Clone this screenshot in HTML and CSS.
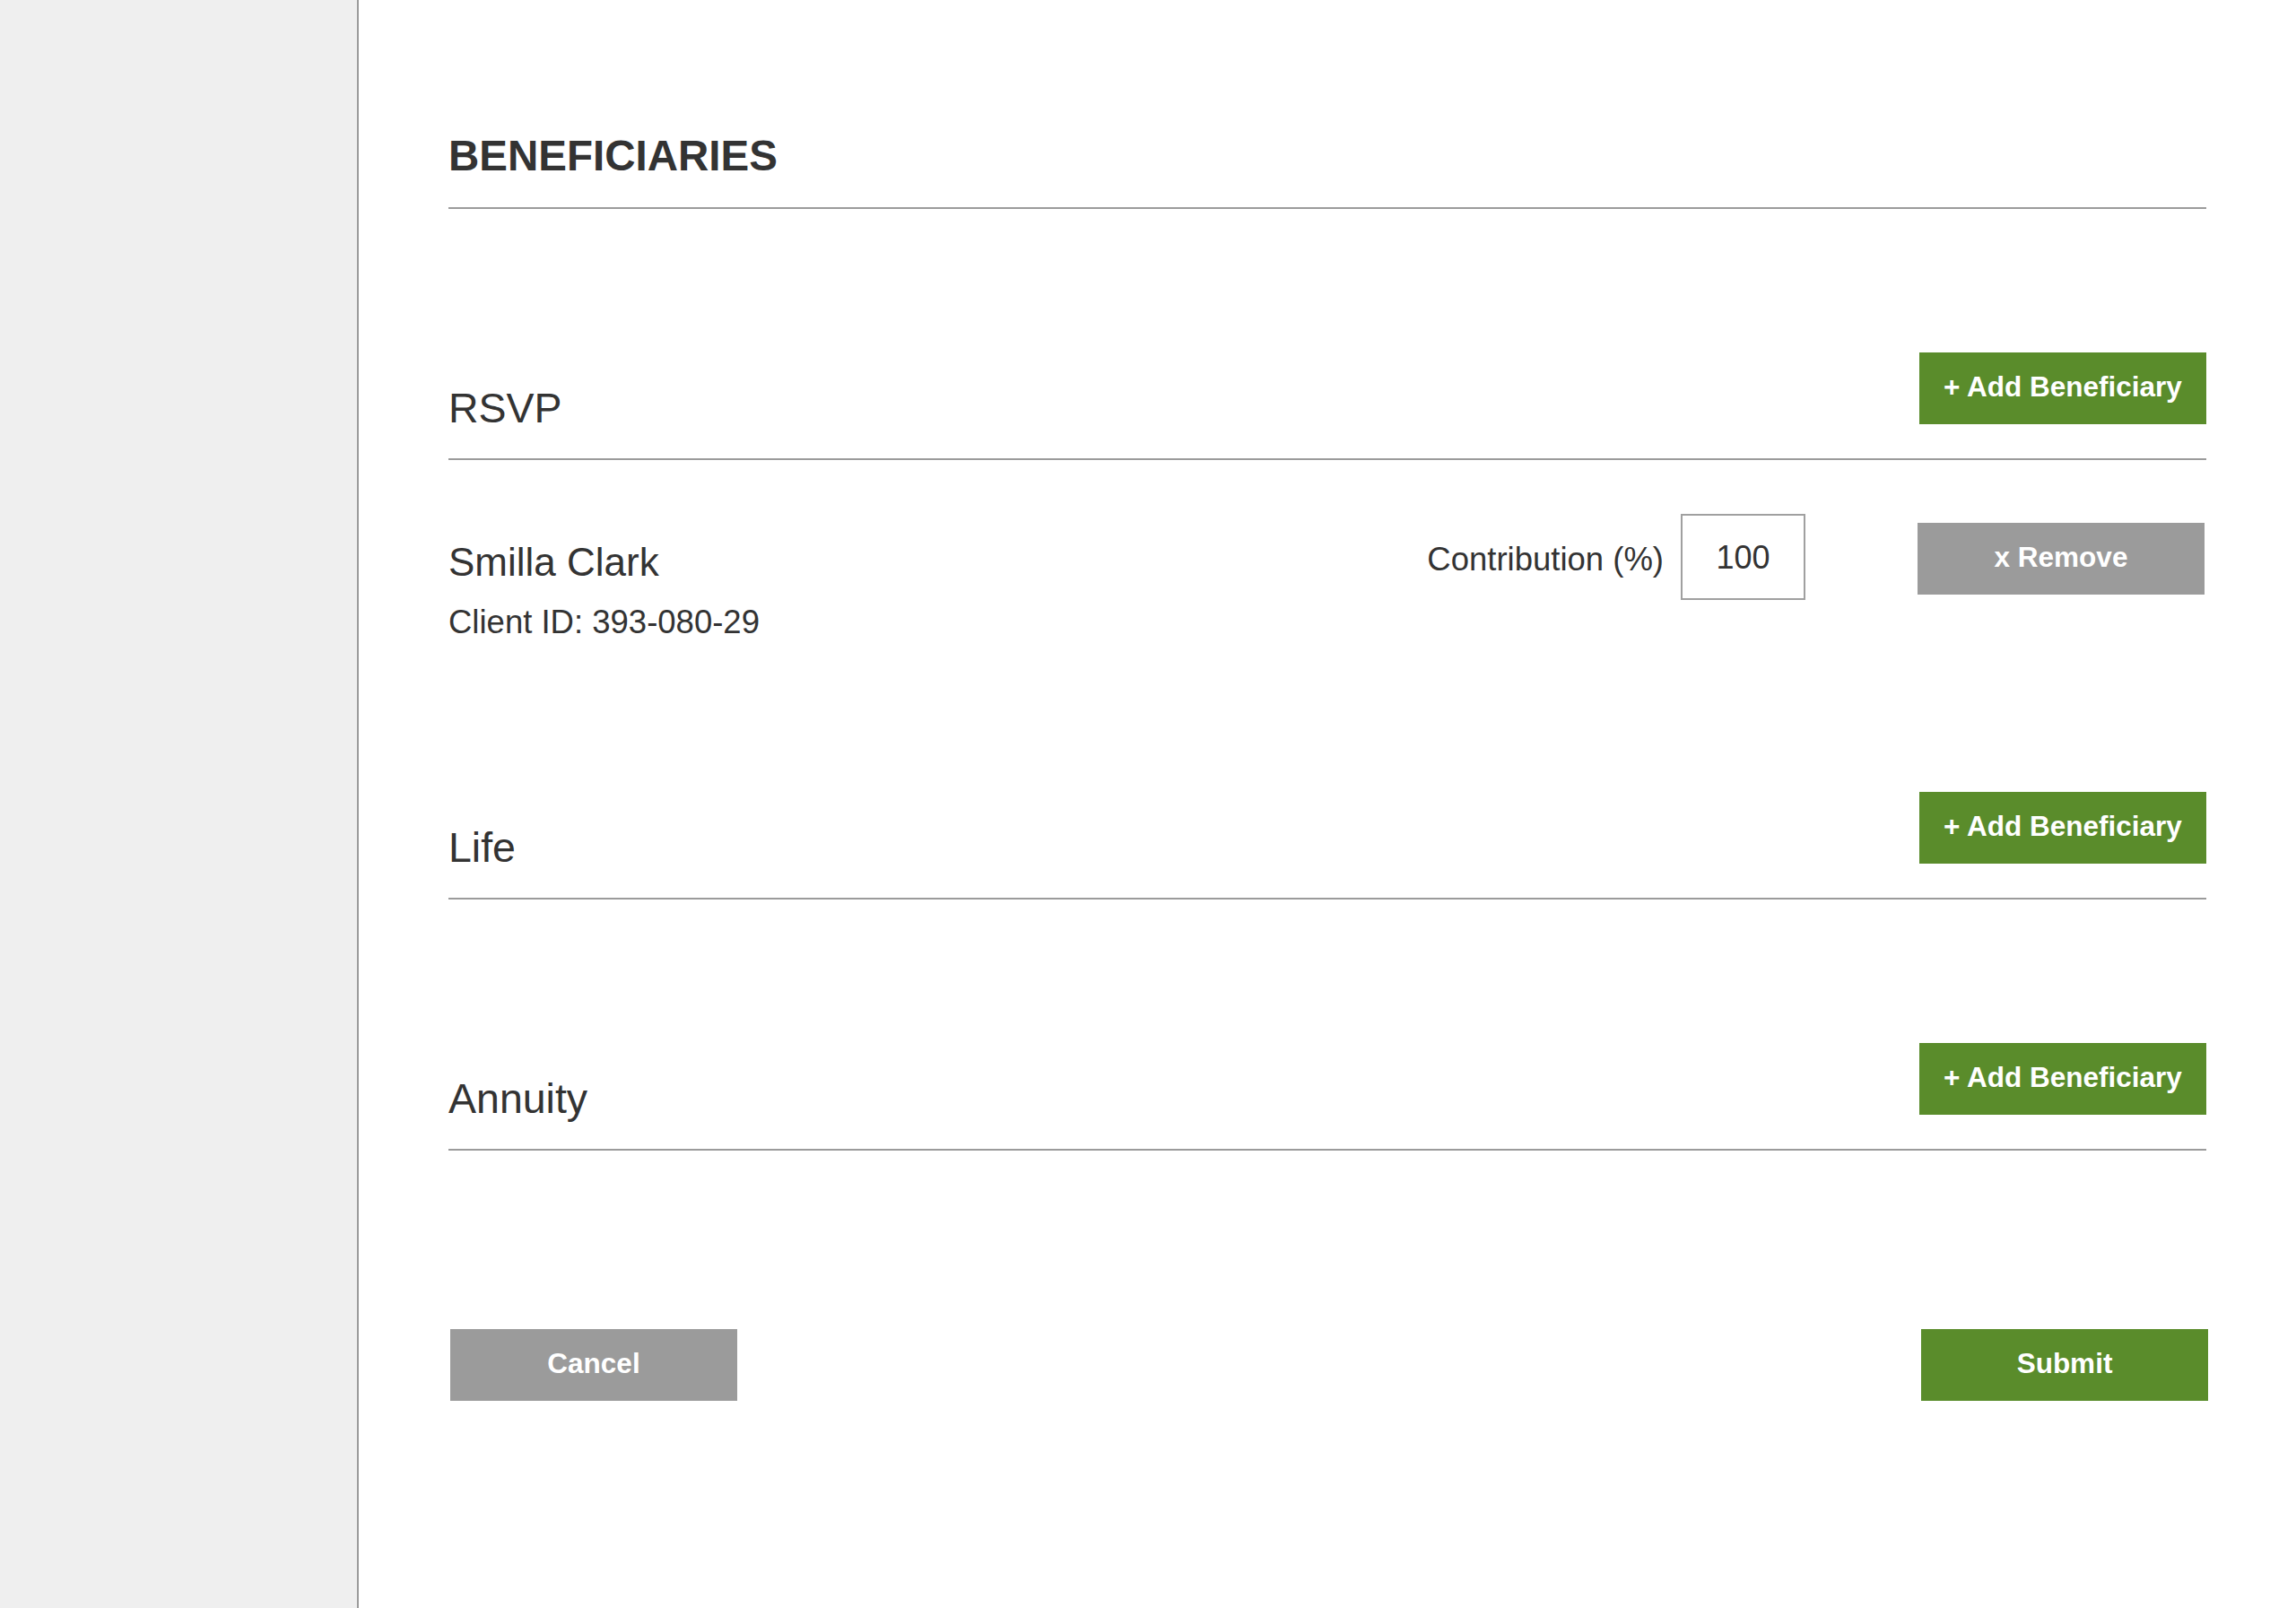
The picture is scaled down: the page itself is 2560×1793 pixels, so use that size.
FILE: index.html
```html
<!DOCTYPE html>
<html lang="en">
<head>
<meta charset="utf-8">
<title>Beneficiaries</title>
<link rel="stylesheet" href="styles.css">
</head>
<body>
<div class="layout">
  <aside class="sidebar"></aside>
  <main class="main">
    <h1 class="page-title">BENEFICIARIES</h1>

    <section class="group">
      <div class="group-header">
        <h2 class="group-title">RSVP</h2>
        <button class="btn btn-green" type="button">+ Add Beneficiary</button>
      </div>
      <div class="entry">
        <div class="entry-info">
          <div class="entry-name">Smilla Clark</div>
          <div class="entry-id">Client ID: 393-080-29</div>
        </div>
        <div class="entry-controls">
          <label class="contrib-label" for="c1">Contribution (%)</label>
          <input class="contrib-input" id="c1" type="text" value="100">
          <button class="btn btn-gray btn-remove" type="button">x Remove</button>
        </div>
      </div>
    </section>

    <section class="group">
      <div class="group-header">
        <h2 class="group-title">Life</h2>
        <button class="btn btn-green" type="button">+ Add Beneficiary</button>
      </div>
    </section>

    <section class="group">
      <div class="group-header">
        <h2 class="group-title">Annuity</h2>
        <button class="btn btn-green" type="button">+ Add Beneficiary</button>
      </div>
    </section>

    <div class="footer">
      <button class="btn btn-gray" type="button">Cancel</button>
      <button class="btn btn-green" type="button">Submit</button>
    </div>
  </main>
</div>
</body>
</html>
```

FILE: styles.css
```css
html, body {
  margin: 0;
  padding: 0;
  background: #ffffff;
}

body {
  font-family: "Liberation Sans", Arial, Helvetica, sans-serif;
  color: #333333;
}

.layout {
  display: flex;
  min-height: 100vh;
}

.sidebar {
  width: 398px;
  flex: 0 0 398px;
  background: #efefef;
  border-right: 2px solid #9b9b9b;
}

.main {
  flex: 1;
  padding: 146px 100px 0 100px;
  min-width: 0;
}

.page-title {
  margin: 0;
  font-size: 47.5px;
  line-height: 56px;
  font-weight: 700;
  color: #333333;
  padding-bottom: 29px;
  border-bottom: 2px solid #9b9b9b;
}

.group {
  margin-top: 160px;
}

.group-header {
  display: flex;
  justify-content: space-between;
  align-items: flex-end;
  padding-bottom: 38px;
  border-bottom: 2px solid #9b9b9b;
}

.group-title {
  margin: 0 0 -2px 0;
  font-size: 46.5px;
  line-height: 40px;
  font-weight: 400;
  color: #333333;
}

.btn {
  box-sizing: border-box;
  width: 320px;
  height: 80px;
  border: none;
  border-radius: 0;
  padding: 0 0 3px 0;
  margin: 0;
  font-family: "Liberation Sans", Arial, Helvetica, sans-serif;
  font-size: 31.5px;
  font-weight: 700;
  color: #ffffff;
  cursor: pointer;
}

.btn-green {
  background: #5a8c2b;
}

.btn-gray {
  background: #9b9b9b;
}

.entry {
  display: flex;
  justify-content: space-between;
  align-items: flex-start;
  padding: 60px 0 7px 0;
}

.entry-info {
  padding-top: 28px;
}

.entry-name {
  font-size: 44px;
  line-height: 52px;
  color: #333333;
  margin-bottom: 19px;
}

.entry-id {
  font-size: 36.5px;
  line-height: 44px;
  color: #333333;
}

.entry-controls {
  display: flex;
  align-items: center;
}

.contrib-label {
  font-size: 36.5px;
  line-height: 42px;
  color: #333333;
  margin-right: 19px;
  padding-top: 5px;
}

.contrib-input {
  box-sizing: border-box;
  width: 139px;
  height: 96px;
  border: 2px solid #a0a0a0;
  border-radius: 0;
  padding: 2px 0 0 0;
  margin: 0;
  font-family: "Liberation Sans", Arial, Helvetica, sans-serif;
  font-size: 36px;
  color: #333333;
  text-align: center;
  background: #ffffff;
  outline: none;
}

.btn-remove {
  margin-left: 125px;
  margin-right: 2px;
  margin-top: 4px;
}

.footer {
  display: flex;
  justify-content: space-between;
  margin: 199px -2px 0 2px;
  padding-bottom: 100px;
}
```
